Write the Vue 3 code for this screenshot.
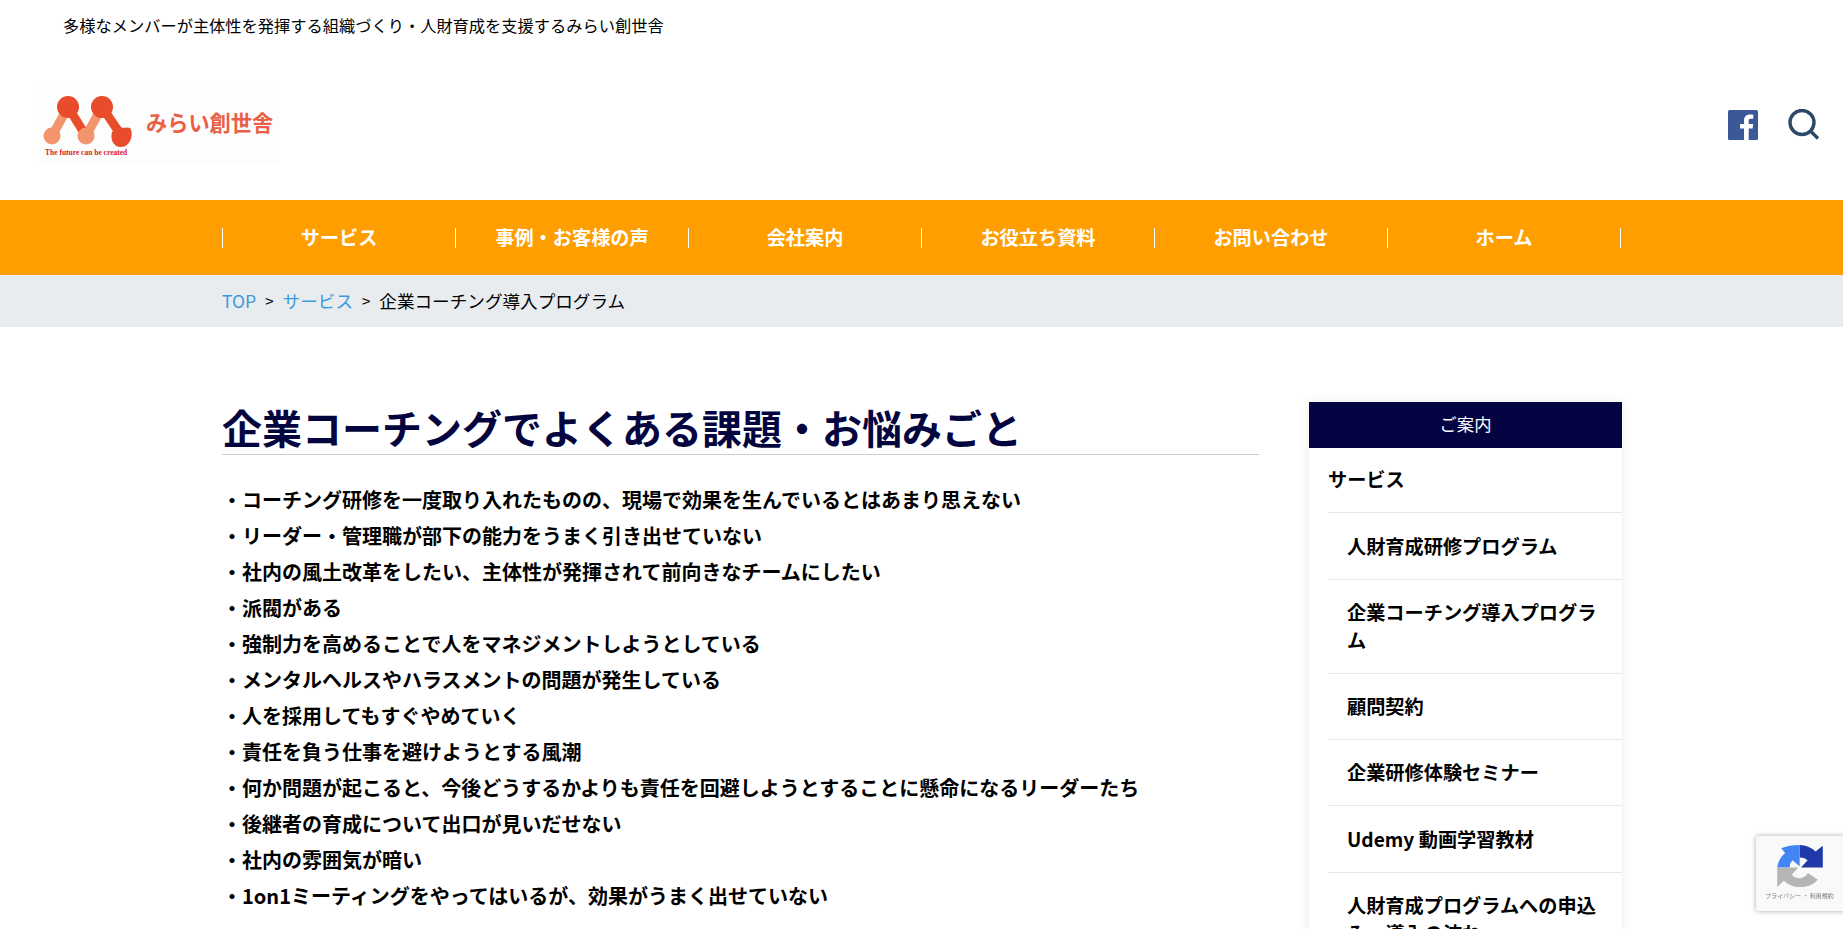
<script setup>
const navItems = ["サービス", "事例・お客様の声", "会社案内", "お役立ち資料", "お問い合わせ", "ホーム"];
const issues = [
  "・コーチング研修を一度取り入れたものの、現場で効果を生んでいるとはあまり思えない",
  "・リーダー・管理職が部下の能力をうまく引き出せていない",
  "・社内の風土改革をしたい、主体性が発揮されて前向きなチームにしたい",
  "・派閥がある",
  "・強制力を高めることで人をマネジメントしようとしている",
  "・メンタルヘルスやハラスメントの問題が発生している",
  "・人を採用してもすぐやめていく",
  "・責任を負う仕事を避けようとする風潮",
  "・何か問題が起こると、今後どうするかよりも責任を回避しようとすることに懸命になるリーダーたち",
  "・後継者の育成について出口が見いだせない",
  "・社内の雰囲気が暗い",
  "・1on1ミーティングをやってはいるが、効果がうまく出せていない",
];
const subMenu = [
  "人財育成研修プログラム",
  "企業コーチング導入プログラム",
  "顧問契約",
  "企業研修体験セミナー",
  "Udemy 動画学習教材",
  "人財育成プログラムへの申込み・導入の流れ",
];
</script>

<template>
  <div class="page">
    <header class="header">
      <p class="tagline">多様なメンバーが主体性を発揮する組織づくり・人財育成を支援するみらい創世舎</p>
      <div class="header-row">
        <svg class="logo" viewBox="0 0 242 76" width="242" height="76">
          <rect width="242" height="76" fill="#fdfdfd" />
          <g fill="none" stroke-width="9">
            <path d="M14 49 L30 20" stroke="#f2956c" />
            <path d="M48 49 L64 20" stroke="#f2956c" />
            <path d="M30 20 L48 49" stroke="#e84c2a" />
            <path d="M64 20 L83 48" stroke="#e84c2a" />
          </g>
          <circle cx="30" cy="20" r="11" fill="#e84c2a" />
          <circle cx="64" cy="20" r="11" fill="#e84c2a" />
          <circle cx="14" cy="49" r="8.5" fill="#f2956c" />
          <circle cx="48" cy="49" r="8.5" fill="#f2956c" />
          <path d="M81 39 C85 43 89 39 92 41 C96 46 93 60 83 60 C75 60 72 52 74 45 Z" fill="#e84c2a" />
          <text class="logo-name" x="108" y="44">みらい創世舎</text>
          <text class="logo-small" x="7" y="68">The future can be created</text>
        </svg>
        <div class="header-icons">
          <svg width="30" height="30" viewBox="0 0 30 30">
            <rect width="30" height="30" rx="1.5" fill="#3b5998" />
            <path d="M20.7 30 V18.4 H24.6 L25.2 13.9 H20.7 V11 C20.7 9.7 21.1 8.8 22.9 8.8 H25.3 V4.8 C24.9 4.7 23.5 4.6 21.9 4.6 C18.4 4.6 16 6.7 16 10.6 V13.9 H12.1 V18.4 H16 V30 Z" fill="#fff" />
          </svg>
          <svg width="32" height="32" viewBox="0 0 32 32">
            <circle cx="14" cy="13.5" r="12" fill="none" stroke="#2c4a68" stroke-width="3.4" />
            <path d="M23 22.5 L30 29.5" stroke="#2c4a68" stroke-width="3.4" fill="none" />
          </svg>
        </div>
      </div>
    </header>

    <nav class="nav">
      <ul class="nav-list">
        <li v-for="item in navItems" :key="item" class="nav-item">{{ item }}</li>
      </ul>
    </nav>

    <div class="crumbs">
      <div class="crumbs-inner">
        <a class="crumb-link">TOP</a>
        <span class="crumb-sep">&gt;</span>
        <a class="crumb-link">サービス</a>
        <span class="crumb-sep">&gt;</span>
        <span>企業コーチング導入プログラム</span>
      </div>
    </div>

    <div class="content">
      <main class="main">
        <h2 class="title">企業コーチングでよくある課題・お悩みごと</h2>
        <p v-for="line in issues" :key="line" class="issue">{{ line }}</p>
      </main>
      <aside class="side">
        <div class="side-head">ご案内</div>
        <ul class="side-menu">
          <li class="side-top">サービス</li>
          <li v-for="item in subMenu" :key="item" class="side-sub">{{ item }}</li>
        </ul>
      </aside>
    </div>

    <div class="recaptcha">
      <svg class="recaptcha-mark" width="46" height="42" viewBox="0 0 138 127">
        <path d="M68 0 A68 68 0 0 1 116 20 L138 2 V68 H72 L92 46 A30 30 0 0 0 68 38 Z" fill="#1f3aa8" />
        <path d="M0 68 A68 68 0 0 1 24 24 L12 10 C30 3 48 0 68 0 V64 L46 46 A30 30 0 0 0 38 68 Z" fill="#4285f4" />
        <path d="M0 68 H64 L44 90 A30 30 0 0 0 93 85 L123 105 A68 68 0 0 1 68 127 A66 66 0 0 1 20 108 L0 127 Z" fill="#b5b5b5" />
      </svg>
      <div class="recaptcha-text">プライバシー ・ 利用規約</div>
    </div>
  </div>
</template>

<style scoped>
.page {
  font-family: "Noto Sans CJK JP", "Noto Sans", sans-serif;
  color: #000;
}
.header {
  height: 200px;
  background: #fff;
}
.tagline {
  margin: 0;
  padding: 13px 0 0 63px;
  font-size: 16.24px;
  line-height: 24px;
}
.header-row {
  display: flex;
  justify-content: space-between;
  align-items: center;
  margin-top: 50px;
  padding: 0 23px 0 38px;
}
.logo {
  display: block;
}
.logo-name {
  font-family: "Noto Sans CJK JP", sans-serif;
  font-size: 21.2px;
  font-weight: 700;
  fill: #ea5f48;
}
.logo-small {
  font-family: "Liberation Serif", serif;
  font-size: 7.5px;
  font-weight: 700;
  fill: #e0202c;
}
.header-icons {
  display: flex;
  align-items: center;
  gap: 30px;
}
.nav {
  height: 75px;
  background: #ff9e00;
}
.nav-list {
  display: flex;
  align-items: center;
  width: 1399px;
  height: 75px;
  margin: 0 0 0 222px;
  padding: 0;
  list-style: none;
}
.nav-item {
  flex: 1;
  height: 20px;
  line-height: 18px;
  text-align: center;
  font-size: 19.2px;
  font-weight: 700;
  color: #fff;
  border-left: 1px solid #fff;
}
.nav-item:last-child {
  border-right: 1px solid #fff;
}
.crumbs {
  height: 52px;
  background: #e8ecef;
}
.crumbs-inner {
  display: flex;
  align-items: center;
  gap: 9px;
  height: 50px;
  margin-left: 222px;
  font-size: 17.6px;
}
.crumb-link {
  color: #3f98dc;
}
.crumb-sep {
  font-size: 15px;
}
.content {
  display: flex;
  justify-content: space-between;
  width: 1400px;
  margin: 75px 0 0 222px;
}
.main {
  width: 1037px;
}
.title {
  margin: 0 0 27px;
  font-size: 40px;
  line-height: 51px;
  padding-bottom: 1px;
  font-weight: 700;
  color: #04043f;
  border-bottom: 1px solid #ccc;
}
.issue {
  margin: 0;
  font-size: 20px;
  line-height: 36px;
  font-weight: 700;
}
.side {
  width: 313px;
  box-shadow: 0 0 12px rgba(0, 0, 0, 0.08);
}
.side-head {
  height: 46px;
  line-height: 44px;
  text-align: center;
  font-size: 17.3px;
  color: #fff;
  background: #040342;
}
.side-menu {
  margin: 0;
  padding: 0 0 0 19px;
  list-style: none;
}
.side-top,
.side-sub {
  padding: 19.4px 19px 18.4px 0;
  font-size: 19.2px;
  line-height: 27.6px;
  font-weight: 700;
  border-bottom: 1px solid #e8e8e8;
}
.side-top {
  padding-top: 18.2px;
  padding-bottom: 18.4px;
}
.side-sub {
  padding-left: 19px;
}
.recaptcha {
  position: fixed;
  left: 1756px;
  top: 836px;
  width: 256px;
  height: 75px;
  border-radius: 3px;
  background: #f9f9f9;
  box-shadow: 0 0 5px rgba(0, 0, 0, 0.35);
}
.recaptcha-mark {
  display: block;
  margin: 9px 0 0 21px;
}
.recaptcha-text {
  width: 87px;
  margin-top: 4px;
  text-align: center;
  font-size: 6px;
  line-height: 10px;
  color: #777;
}
</style>

<style>
html,
body {
  overflow: hidden;
  background: #fff;
}
</style>
